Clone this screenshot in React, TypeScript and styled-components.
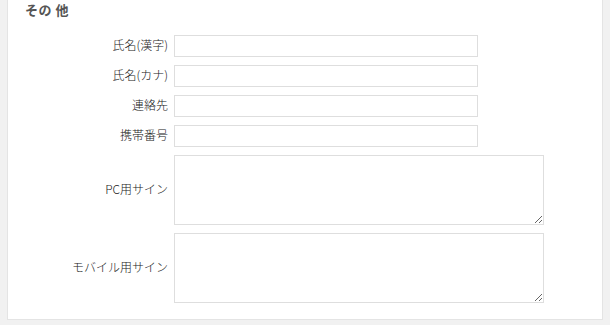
import React from 'react';
import styled, { createGlobalStyle } from 'styled-components';

const GlobalStyle = createGlobalStyle`
  html, body {
    margin: 0;
    padding: 0;
    background: #f1f1f1;
  }
  body {
    font-family: "Noto Sans CJK JP", "Liberation Sans", sans-serif;
    font-size: 12px;
    color: #333;
  }
`;

const Page = styled.div`
  padding: 0 7px 5px 7px;
  width: 610px;
  box-sizing: border-box;
`;

const Panel = styled.section`
  background: #fff;
  border: 1px solid #e4e4e4;
  border-top: none;
  padding: 0 0 16px 0;
`;

const Heading = styled.h3`
  margin: 0;
  padding: 0 0 0 17px;
  height: 35px;
  box-sizing: border-box;
  font-size: 13px;
  font-weight: bold;
  color: #555;
  letter-spacing: 0.5px;
`;

const Form = styled.div`
  display: flex;
  flex-direction: column;
  gap: 8px;
`;

const Row = styled.label`
  display: grid;
  grid-template-columns: 160px auto;
  column-gap: 6px;
  align-items: center;
`;

const Label = styled.span`
  text-align: right;
  font-size: 12px;
  font-weight: 300;
  color: #222;
  line-height: 14px;
  margin-top: -3px;
`;

const Input = styled.input`
  width: 304px;
  height: 22px;
  box-sizing: border-box;
  border: 1px solid #dedede;
  background: #fff;
  padding: 2px 4px;
  margin: 0;
  font: inherit;
  outline: none;
`;

const TextArea = styled.textarea`
  width: 370px;
  height: 70px;
  box-sizing: border-box;
  border: 1px solid #dedede;
  background: #fff;
  padding: 2px 4px;
  margin: 0;
  font: inherit;
  outline: none;
  display: block;
`;

const fields = ['氏名(漢字)', '氏名(カナ)', '連絡先', '携帯番号'];
const signs = ['PC用サイン', 'モバイル用サイン'];

export default function App() {
  return (
    <>
      <GlobalStyle />
      <Page>
        <Panel>
          <Heading>その 他</Heading>
          <Form>
            {fields.map((f) => (
              <Row key={f}>
                <Label>{f}</Label>
                <Input type="text" />
              </Row>
            ))}
            {signs.map((s) => (
              <Row key={s}>
                <Label>{s}</Label>
                <TextArea />
              </Row>
            ))}
          </Form>
        </Panel>
      </Page>
    </>
  );
}
